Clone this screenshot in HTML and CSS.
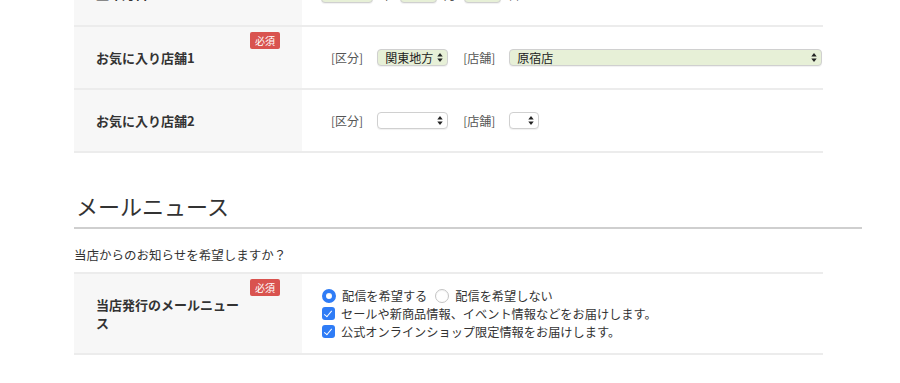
FILE: index.html
```
<!DOCTYPE html>
<html lang="ja">
<head>
  <meta charset="UTF-8">
  <meta name="viewport" content="width=device-width, initial-scale=1.0">
  <title>会員情報 - メールニュース</title>
  <link rel="stylesheet" href="styles.css">
</head>
<body>
  <div class="page">
    <!-- 店舗情報 -->
    <table class="form-table">
      <tr>
        <th>生年月日</th>
        <td>
          <div class="field-line">
            <span class="select-wrap w-year green">
              <select><option>1990</option></select>
              <svg class="arrow" viewBox="0 0 6 10"><polygon points="0,4 3,0 6,4"/><polygon points="0,6 3,10 6,6"/></svg>
            </span>
            <span class="unit">年</span>
            <span class="select-wrap w-day green">
              <select><option>1</option></select>
              <svg class="arrow" viewBox="0 0 6 10"><polygon points="0,4 3,0 6,4"/><polygon points="0,6 3,10 6,6"/></svg>
            </span>
            <span class="unit">月</span>
            <span class="select-wrap w-day green">
              <select><option>1</option></select>
              <svg class="arrow" viewBox="0 0 6 10"><polygon points="0,4 3,0 6,4"/><polygon points="0,6 3,10 6,6"/></svg>
            </span>
            <span class="unit">日</span>
          </div>
        </td>
      </tr>
      <tr>
        <th>お気に入り店舗1<span class="badge">必須</span></th>
        <td>
          <div class="field-line indent">
            <span class="tag">[区分]</span>
            <span class="select-wrap w-area green">
              <select><option>関東地方</option></select>
              <svg class="arrow" viewBox="0 0 6 10"><polygon points="0,4 3,0 6,4"/><polygon points="0,6 3,10 6,6"/></svg>
            </span>
            <span class="tag">[店舗]</span>
            <span class="select-wrap w-shop green">
              <select><option>原宿店</option></select>
              <svg class="arrow" viewBox="0 0 6 10"><polygon points="0,4 3,0 6,4"/><polygon points="0,6 3,10 6,6"/></svg>
            </span>
          </div>
        </td>
      </tr>
      <tr>
        <th>お気に入り店舗2</th>
        <td>
          <div class="field-line indent">
            <span class="tag">[区分]</span>
            <span class="select-wrap w-area">
              <select><option></option></select>
              <svg class="arrow" viewBox="0 0 6 10"><polygon points="0,4 3,0 6,4"/><polygon points="0,6 3,10 6,6"/></svg>
            </span>
            <span class="tag">[店舗]</span>
            <span class="select-wrap w-tiny">
              <select><option></option></select>
              <svg class="arrow" viewBox="0 0 6 10"><polygon points="0,4 3,0 6,4"/><polygon points="0,6 3,10 6,6"/></svg>
            </span>
          </div>
        </td>
      </tr>
    </table>

    <!-- メールニュース -->
    <h2 class="section-title">メールニュース</h2>
    <p class="lead">当店からのお知らせを希望しますか？</p>

    <table class="form-table">
      <tr class="tall">
        <th>当店発行のメールニュース<span class="badge">必須</span></th>
        <td>
          <div class="choices">
            <div class="choice-row">
              <label class="choice"><input type="radio" name="news" checked> 配信を希望する</label>
              <label class="choice"><input type="radio" name="news"> 配信を希望しない</label>
            </div>
            <label class="choice"><input type="checkbox" checked> セールや新商品情報、イベント情報などをお届けします。</label>
            <label class="choice"><input type="checkbox" checked> 公式オンラインショップ限定情報をお届けします。</label>
          </div>
        </td>
      </tr>
    </table>
  </div>
</body>
</html>
```

FILE: styles.css
```
* {
  margin: 0;
  padding: 0;
  box-sizing: border-box;
}

body {
  font-family: "Noto Sans CJK JP", "Noto Sans", sans-serif;
  font-size: 12px;
  color: #333;
  background: #fff;
  overflow: hidden;
}

.page {
  width: 788px;
  margin: -37px 0 0 74px;
}

/* table rows */
.form-table {
  width: 95%;
  border-collapse: collapse;
}

.form-table tr {
  border-bottom: 2px solid #ececec;
}

.form-table th {
  position: relative;
  width: 228px;
  height: 63px;
  padding: 0 56px 0 22px;
  background: #f7f7f7;
  text-align: left;
  font-size: 13px;
  font-weight: bold;
  line-height: 18px;
  color: #333;
}

.form-table td {
  padding: 0 0 0 19px;
  vertical-align: middle;
}

.form-table tr.tall th,
.form-table tr.tall td {
  height: 81px;
}

.form-table tr.tall {
  border-top: 2px solid #ececec;
}

.badge {
  position: absolute;
  top: 5px;
  right: 22px;
  width: 30px;
  height: 17px;
  border-radius: 2px;
  background: #d9534f;
  color: #fff;
  font-size: 10px;
  font-weight: normal;
  line-height: 17px;
  text-align: center;
}

/* selects */
.field-line {
  display: flex;
  align-items: center;
}

.field-line.indent {
  padding-left: 10px;
}

.tag {
  color: #555;
  margin-right: 14px;
}

.select-wrap + .tag {
  margin-left: 15px;
}

.unit {
  color: #555;
  margin: 0 8px 0 7px;
}

.select-wrap {
  position: relative;
  display: inline-block;
  height: 17px;
}

.select-wrap select {
  appearance: none;
  -webkit-appearance: none;
  width: 100%;
  height: 17px;
  padding: 0 14px 0 7px;
  border: 1px solid #d0d0d0;
  border-radius: 4px;
  background: #fff;
  font-family: inherit;
  font-size: 12px;
  line-height: 15px;
  color: #222;
  box-shadow: 0 1px 1px rgba(0, 0, 0, 0.06);
}

.select-wrap.green select {
  background: #e7f0d7;
}

.select-wrap .arrow {
  position: absolute;
  top: 4px;
  right: 5px;
  width: 6px;
  height: 9px;
  fill: #222;
  pointer-events: none;
}

.w-year { width: 52px; }
.w-day { width: 37px; }
.w-area { width: 71px; }
.w-shop { width: 313px; }
.w-tiny { width: 30px; }

/* heading */
.section-title {
  margin-top: 36px;
  padding: 0 0 6px 2px;
  border-bottom: 2px solid #cfcfcf;
  font-size: 22px;
  font-weight: normal;
  line-height: 32px;
  color: #333;
}

.lead {
  margin: 17px 0 8px;
  font-size: 12.5px;
  line-height: 18px;
  color: #333;
}

/* radio & checkbox */
.choices {
  display: flex;
  flex-direction: column;
  font-size: 12.2px;
  line-height: 18px;
  color: #333;
}

.choice-row {
  display: flex;
  gap: 7px;
}

.choice {
  display: flex;
  align-items: center;
}

.choice input {
  appearance: none;
  -webkit-appearance: none;
  margin: 0 6px 0 1px;
  flex: none;
}

.choice input[type="radio"] {
  width: 14px;
  height: 14px;
  border-radius: 50%;
  border: 1px solid #c4c4c4;
  background: #fff;
  box-shadow: inset 0 1px 1px rgba(0, 0, 0, 0.05);
}

.choice input[type="radio"]:checked {
  border: 4.5px solid #2f7cf6;
  background: #fff;
}

.choice input[type="checkbox"] {
  width: 13px;
  height: 13px;
  border-radius: 3px;
  background: #2f7cf6;
  position: relative;
}

.choice input[type="checkbox"]::after {
  content: "";
  position: absolute;
  left: 4px;
  top: 1.5px;
  width: 3px;
  height: 7px;
  border: solid #fff;
  border-width: 0 1.5px 1.5px 0;
  transform: rotate(40deg);
}
```
